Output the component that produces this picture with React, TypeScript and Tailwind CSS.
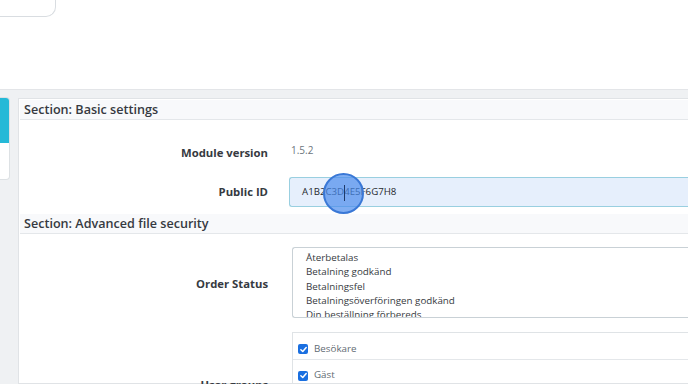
import React from "react";

const Check = () => (
  <span className="flex h-[10px] w-[10px] items-center justify-center rounded-[2px] bg-[#1a6fe0]">
    <svg viewBox="0 0 12 12" className="h-[9px] w-[9px]">
      <path d="M2.5 6.3 L5 8.6 L9.6 3.4" fill="none" stroke="white" strokeWidth="2" strokeLinecap="round" strokeLinejoin="round" />
    </svg>
  </span>
);

const Label = ({ children, className = "" }: { children: React.ReactNode; className?: string }) => (
  <div className={`w-[248px] shrink-0 text-right text-[11.3px] font-bold text-[#363a41] ${className}`}>{children}</div>
);

const SectionHeader = ({ children }: { children: React.ReactNode }) => (
  <div className="h-[20px] border-b border-[#e4e7ea] bg-[#f8f9fb] pl-[4px] text-[12.6px] font-semibold leading-[19px] text-[#363a41]">
    {children}
  </div>
);

export default function App() {
  const options = [
    "Återbetalas",
    "Betalning godkänd",
    "Betalningsfel",
    "Betalningsöverföringen godkänd",
    "Din beställning förbereds",
    "Levererad",
  ];
  const groups = ["Besökare", "Gäst", "Kund", "Grossist"];
  return (
    <div className="h-[384px] w-[688px] overflow-hidden bg-white font-['Open_Sans',sans-serif]">
      <div className="h-[89px]">
        <div className="h-[17px] w-[56px] rounded-br-[10px] border-b border-r border-[#d9dde1]" />
      </div>
      <div className="flex h-[295px] gap-[8px] border-t border-[#e3e5e8] bg-[#eff1f3] pt-[7px]">
        <div className="h-[83px] w-[10px] shrink-0 overflow-hidden rounded-r-[4px] border border-l-0 border-[#dde1e4] bg-white">
          <div className="h-[45px] bg-[#25b9d7]" />
        </div>
        <div className="mt-[1px] flex-1 border border-r-0 border-[#e0e3e6] bg-white pl-[1px] pt-[1px]">
          <SectionHeader>Section: Basic settings</SectionHeader>

          <div className="mt-[23px] flex h-[20px] items-center">
            <Label>Module version</Label>
            <div className="ml-[23px] pb-[5px] text-[10px] text-[#6c757d]">1.5.2</div>
          </div>

          <div className="mt-[14px] flex h-[30px] items-center">
            <Label>Public ID</Label>
            <div className="relative ml-[21px] flex h-[30px] flex-1 items-center rounded-l-[3px] border border-[#99cfe0] border-r-0 bg-[#e6effc] pl-[12px] text-[9.7px] text-[#25292e]">
              A1B2C3D4E5F6G7H8
              <div className="absolute left-[33px] top-[-5px] h-[41px] w-[41px] rounded-full border-2 border-[#3a78d6] bg-[rgba(74,140,236,0.7)]" />
              <div className="absolute left-[54px] top-[7px] h-[16px] w-px bg-[#1e3a6a]" />
            </div>
          </div>

          <div className="mt-[7px]">
            <SectionHeader>Section: Advanced file security</SectionHeader>
          </div>

          <div className="mt-[13px] flex items-center">
            <Label className="pt-[3px]">Order Status</Label>
            <div className="ml-[24px] h-[71px] flex-1 overflow-hidden rounded-l-[3px] border border-r-0 border-[#c9d1d6] pl-[13px] pt-[3px] text-[9.8px] leading-[14.3px] text-[#363a41]">
              {options.map((o) => (
                <div key={o}>{o}</div>
              ))}
            </div>
          </div>

          <div className="mt-[14px] flex items-center">
            <Label>User groups</Label>
            <div className="ml-[24px] flex-1 border border-r-0 border-[#dfe3e6]">
              {groups.map((g, i) => (
                <div
                  key={g}
                  className={`flex h-[26px] items-center gap-[6px] pl-[5px] pt-[6px] text-[9.8px] text-[#5f6b73] ${i > 0 ? "border-t border-[#e4e7ea]" : ""}`}
                >
                  <Check />
                  <span>{g}</span>
                </div>
              ))}
            </div>
          </div>
        </div>
      </div>
    </div>
  );
}
